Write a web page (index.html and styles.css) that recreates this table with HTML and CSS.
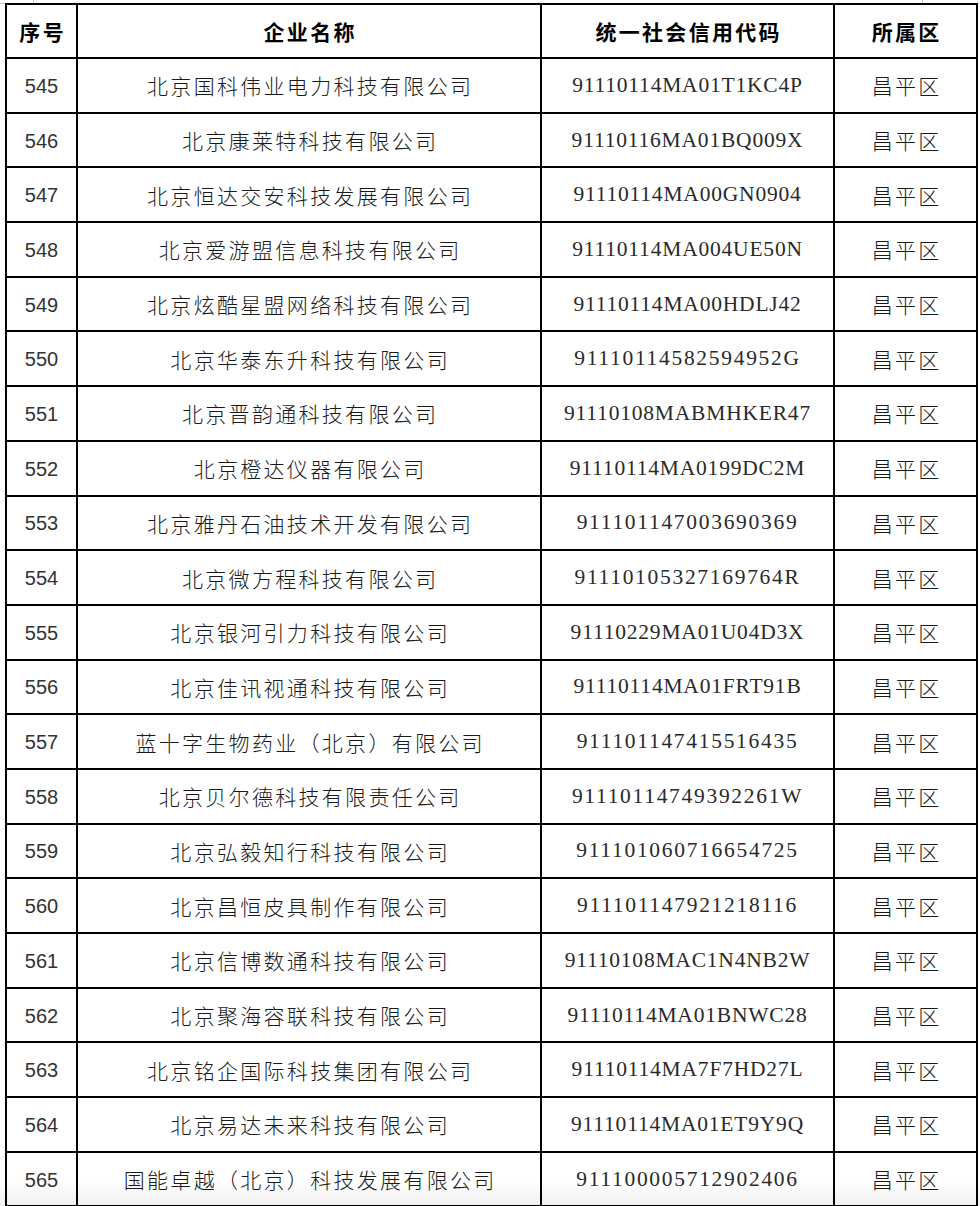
FILE: index.html
```html
<!DOCTYPE html>
<html lang="zh-CN">
<head>
<meta charset="utf-8">
<title>企业名单</title>
<link rel="stylesheet" href="styles.css">
</head>
<body>
<div class="page">
  <span class="mark mark-left"></span>
  <span class="mark mark-right"></span>
  <table class="list">
    <colgroup>
      <col class="c-no">
      <col class="c-name">
      <col class="c-code">
      <col class="c-area">
    </colgroup>
    <thead>
      <tr>
        <th class="zh">序号</th>
        <th class="zh">企业名称</th>
        <th class="zh">统一社会信用代码</th>
        <th class="zh">所属区</th>
      </tr>
    </thead>
    <tbody>
      <tr><td class="no">545</td><td class="zh">北京国科伟业电力科技有限公司</td><td class="code">91110114MA01T1KC4P</td><td class="zh">昌平区</td></tr>
      <tr><td class="no">546</td><td class="zh">北京康莱特科技有限公司</td><td class="code">91110116MA01BQ009X</td><td class="zh">昌平区</td></tr>
      <tr><td class="no">547</td><td class="zh">北京恒达交安科技发展有限公司</td><td class="code">91110114MA00GN0904</td><td class="zh">昌平区</td></tr>
      <tr><td class="no">548</td><td class="zh">北京爱游盟信息科技有限公司</td><td class="code">91110114MA004UE50N</td><td class="zh">昌平区</td></tr>
      <tr><td class="no">549</td><td class="zh">北京炫酷星盟网络科技有限公司</td><td class="code">91110114MA00HDLJ42</td><td class="zh">昌平区</td></tr>
      <tr><td class="no">550</td><td class="zh">北京华泰东升科技有限公司</td><td class="code digits">91110114582594952G</td><td class="zh">昌平区</td></tr>
      <tr><td class="no">551</td><td class="zh">北京晋韵通科技有限公司</td><td class="code">91110108MABMHKER47</td><td class="zh">昌平区</td></tr>
      <tr><td class="no">552</td><td class="zh">北京橙达仪器有限公司</td><td class="code">91110114MA0199DC2M</td><td class="zh">昌平区</td></tr>
      <tr><td class="no">553</td><td class="zh">北京雅丹石油技术开发有限公司</td><td class="code digits">911101147003690369</td><td class="zh">昌平区</td></tr>
      <tr><td class="no">554</td><td class="zh">北京微方程科技有限公司</td><td class="code digits">91110105327169764R</td><td class="zh">昌平区</td></tr>
      <tr><td class="no">555</td><td class="zh">北京银河引力科技有限公司</td><td class="code">91110229MA01U04D3X</td><td class="zh">昌平区</td></tr>
      <tr><td class="no">556</td><td class="zh">北京佳讯视通科技有限公司</td><td class="code">91110114MA01FRT91B</td><td class="zh">昌平区</td></tr>
      <tr><td class="no">557</td><td class="zh">蓝十字生物药业（北京）有限公司</td><td class="code digits">911101147415516435</td><td class="zh">昌平区</td></tr>
      <tr><td class="no">558</td><td class="zh">北京贝尔德科技有限责任公司</td><td class="code digits">91110114749392261W</td><td class="zh">昌平区</td></tr>
      <tr><td class="no">559</td><td class="zh">北京弘毅知行科技有限公司</td><td class="code digits">911101060716654725</td><td class="zh">昌平区</td></tr>
      <tr><td class="no">560</td><td class="zh">北京昌恒皮具制作有限公司</td><td class="code digits">911101147921218116</td><td class="zh">昌平区</td></tr>
      <tr><td class="no">561</td><td class="zh">北京信博数通科技有限公司</td><td class="code">91110108MAC1N4NB2W</td><td class="zh">昌平区</td></tr>
      <tr><td class="no">562</td><td class="zh">北京聚海容联科技有限公司</td><td class="code">91110114MA01BNWC28</td><td class="zh">昌平区</td></tr>
      <tr><td class="no">563</td><td class="zh">北京铭企国际科技集团有限公司</td><td class="code">91110114MA7F7HD27L</td><td class="zh">昌平区</td></tr>
      <tr><td class="no">564</td><td class="zh">北京易达未来科技有限公司</td><td class="code">91110114MA01ET9Y9Q</td><td class="zh">昌平区</td></tr>
      <tr><td class="no">565</td><td class="zh">国能卓越（北京）科技发展有限公司</td><td class="code digits">911100005712902406</td><td class="zh">昌平区</td></tr>
    </tbody>
  </table>
  <div class="shade"></div>
</div>
</body>
</html>
```

FILE: styles.css
```css
html, body {
  margin: 0;
  padding: 0;
  background: #ffffff;
}

.page {
  position: relative;
  width: 980px;
  height: 1206px;
  overflow: hidden;
  padding-top: 3px;
  box-sizing: border-box;
}

.mark {
  position: absolute;
  top: 0;
  height: 3px;
  border-bottom: 1px solid #c8c8c8;
}
.mark-left {
  left: 0;
  width: 33px;
  border-right: 1px solid #c8c8c8;
}
.mark-right {
  left: 922px;
  width: 40px;
  border-left: 1px solid #c8c8c8;
}

.list {
  position: relative;
  margin-left: 5px;
  width: 971px;
  border-collapse: collapse;
  table-layout: fixed;
  color: #1a1a1a;
}

.c-no { width: 71px; }
.c-name { width: 464px; }
.c-code { width: 293px; }
.c-area { width: 143px; }

.list th,
.list td {
  border: 2px solid #000;
  padding: 0;
  text-align: center;
  vertical-align: middle;
  white-space: nowrap;
  overflow: hidden;
}

.list thead tr { height: 54px; }
.list tbody tr { height: 54.7px; }

.zh {
  font-family: "Noto Sans CJK SC", "Noto Sans", sans-serif;
  font-size: 21px;
  letter-spacing: 2.3px;
  padding-left: 2.3px !important;
  font-weight: 300;
}

.list th.zh {
  font-weight: 700;
  color: #000;
}

.no {
  font-family: "Liberation Sans", Arial, sans-serif;
  font-size: 20px;
  font-weight: 400;
  color: #333;
  padding-top: 2px !important;
}

.code {
  font-family: "Liberation Serif", "Times New Roman", serif;
  font-size: 21.5px;
  letter-spacing: 0.8px;
  color: #2a2a2a;
}
.code.digits {
  letter-spacing: 1.7px;
}

.shade {
  position: absolute;
  left: 0;
  right: 0;
  bottom: 0;
  height: 26px;
  background: linear-gradient(to bottom, rgba(0,0,0,0), rgba(0,0,0,0.06));
  pointer-events: none;
}
```
